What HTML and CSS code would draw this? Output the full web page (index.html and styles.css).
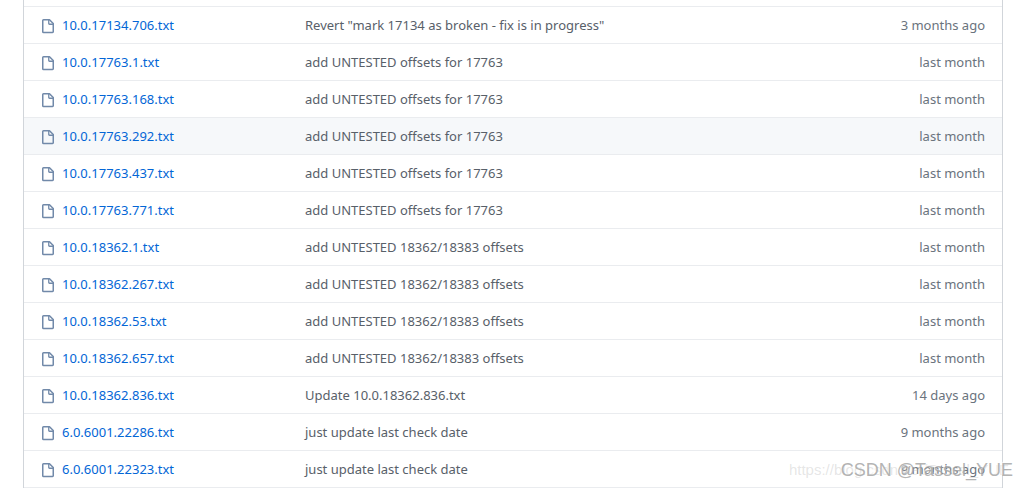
FILE: index.html
```html
<!DOCTYPE html>
<html lang="en">
<head>
    <meta charset="UTF-8">
    <meta name="viewport" content="width=device-width, initial-scale=1.0">
    <title>Files</title>
    <link rel="stylesheet" href="styles.css">
</head>
<body>
    <svg class="sprite" aria-hidden="true">
        <symbol id="file" viewBox="0 0 16 16">
            <path fill="none" stroke="currentColor" stroke-width="1.5" stroke-linejoin="round" d="M3.5 1.75h6l3.75 3.75v8.25a.75.75 0 01-.75.75h-9a.75.75 0 01-.75-.75V2.5a.75.75 0 01.75-.75z"/>
            <path fill="none" stroke="currentColor" stroke-width="1.3" d="M8.75 1.75V5.5a.75.75 0 00.75.75h3.75"/>
        </symbol>
    </svg>
    <table class="files">
        <tbody>
            <tr>
                <td class="name"><svg class="icon"><use href="#file"/></svg><a href="#">10.0.17134.706.txt</a></td>
                <td class="message">Revert "mark 17134 as broken - fix is in progress"</td>
                <td class="age">3 months ago</td>
            </tr>
            <tr>
                <td class="name"><svg class="icon"><use href="#file"/></svg><a href="#">10.0.17763.1.txt</a></td>
                <td class="message">add UNTESTED offsets for 17763</td>
                <td class="age">last month</td>
            </tr>
            <tr>
                <td class="name"><svg class="icon"><use href="#file"/></svg><a href="#">10.0.17763.168.txt</a></td>
                <td class="message">add UNTESTED offsets for 17763</td>
                <td class="age">last month</td>
            </tr>
            <tr class="active">
                <td class="name"><svg class="icon"><use href="#file"/></svg><a href="#">10.0.17763.292.txt</a></td>
                <td class="message">add UNTESTED offsets for 17763</td>
                <td class="age">last month</td>
            </tr>
            <tr>
                <td class="name"><svg class="icon"><use href="#file"/></svg><a href="#">10.0.17763.437.txt</a></td>
                <td class="message">add UNTESTED offsets for 17763</td>
                <td class="age">last month</td>
            </tr>
            <tr>
                <td class="name"><svg class="icon"><use href="#file"/></svg><a href="#">10.0.17763.771.txt</a></td>
                <td class="message">add UNTESTED offsets for 17763</td>
                <td class="age">last month</td>
            </tr>
            <tr>
                <td class="name"><svg class="icon"><use href="#file"/></svg><a href="#">10.0.18362.1.txt</a></td>
                <td class="message">add UNTESTED 18362/18383 offsets</td>
                <td class="age">last month</td>
            </tr>
            <tr>
                <td class="name"><svg class="icon"><use href="#file"/></svg><a href="#">10.0.18362.267.txt</a></td>
                <td class="message">add UNTESTED 18362/18383 offsets</td>
                <td class="age">last month</td>
            </tr>
            <tr>
                <td class="name"><svg class="icon"><use href="#file"/></svg><a href="#">10.0.18362.53.txt</a></td>
                <td class="message">add UNTESTED 18362/18383 offsets</td>
                <td class="age">last month</td>
            </tr>
            <tr>
                <td class="name"><svg class="icon"><use href="#file"/></svg><a href="#">10.0.18362.657.txt</a></td>
                <td class="message">add UNTESTED 18362/18383 offsets</td>
                <td class="age">last month</td>
            </tr>
            <tr>
                <td class="name"><svg class="icon"><use href="#file"/></svg><a href="#">10.0.18362.836.txt</a></td>
                <td class="message">Update 10.0.18362.836.txt</td>
                <td class="age">14 days ago</td>
            </tr>
            <tr>
                <td class="name"><svg class="icon"><use href="#file"/></svg><a href="#">6.0.6001.22286.txt</a></td>
                <td class="message">just update last check date</td>
                <td class="age">9 months ago</td>
            </tr>
            <tr>
                <td class="name"><svg class="icon"><use href="#file"/></svg><a href="#">6.0.6001.22323.txt</a></td>
                <td class="message">just update last check date</td>
                <td class="age">9 months ago</td>
            </tr>
        </tbody>
    </table>
    <div class="watermark url">https://blog.csdn.net/Tassel_YUE</div>
    <div class="watermark author">CSDN @Tassel_YUE</div>
</body>
</html>
```
FILE: styles.css
```css
* {
    box-sizing: border-box;
}
body {
    position: relative;
    margin: 0;
    padding: 0 14px 0 23px;
    background-color: #fff;
    font-family: "Noto Sans", "Open Sans", sans-serif;
    font-size: 13px;
    line-height: 20px;
    color: #586069;
}
.sprite {
    display: none;
}
.files {
    width: 100%;
    table-layout: fixed;
    border-collapse: separate;
    border-spacing: 0;
    padding-top: 6px;
    border-left: 1px solid #d1d5da;
    border-right: 1px solid #d1d5da;
}
td {
    height: 37px;
    padding: 0;
    border-top: 1px solid #eaecef;
    white-space: nowrap;
}
tr:last-child td {
    height: 38px;
    border-bottom: 1px solid #eaecef;
}
.active td {
    background-color: #f6f8fa;
}
.name {
    width: 281px;
    padding-left: 16px;
}
.name a {
    color: #0366d6;
    text-decoration: none;
}
.icon {
    width: 16px;
    height: 16px;
    margin-right: 6px;
    color: #7189a9;
    vertical-align: text-bottom;
}
.age {
    width: 160px;
    padding-right: 17px;
    text-align: right;
    color: #6a737d;
}

/* watermarks over the last row */
.watermark {
    position: absolute;
    white-space: nowrap;
    font-family: "Liberation Sans", Arial, sans-serif;
}
.url {
    right: 8px;
    bottom: 8px;
    font-size: 15px;
    color: rgba(170, 170, 170, 0.3);
}
.author {
    right: 4px;
    bottom: 8px;
    font-size: 18px;
    color: rgba(160, 160, 160, 0.8);
    text-shadow: -1px -1px 1px rgba(255, 255, 255, 0.7);
}
```
